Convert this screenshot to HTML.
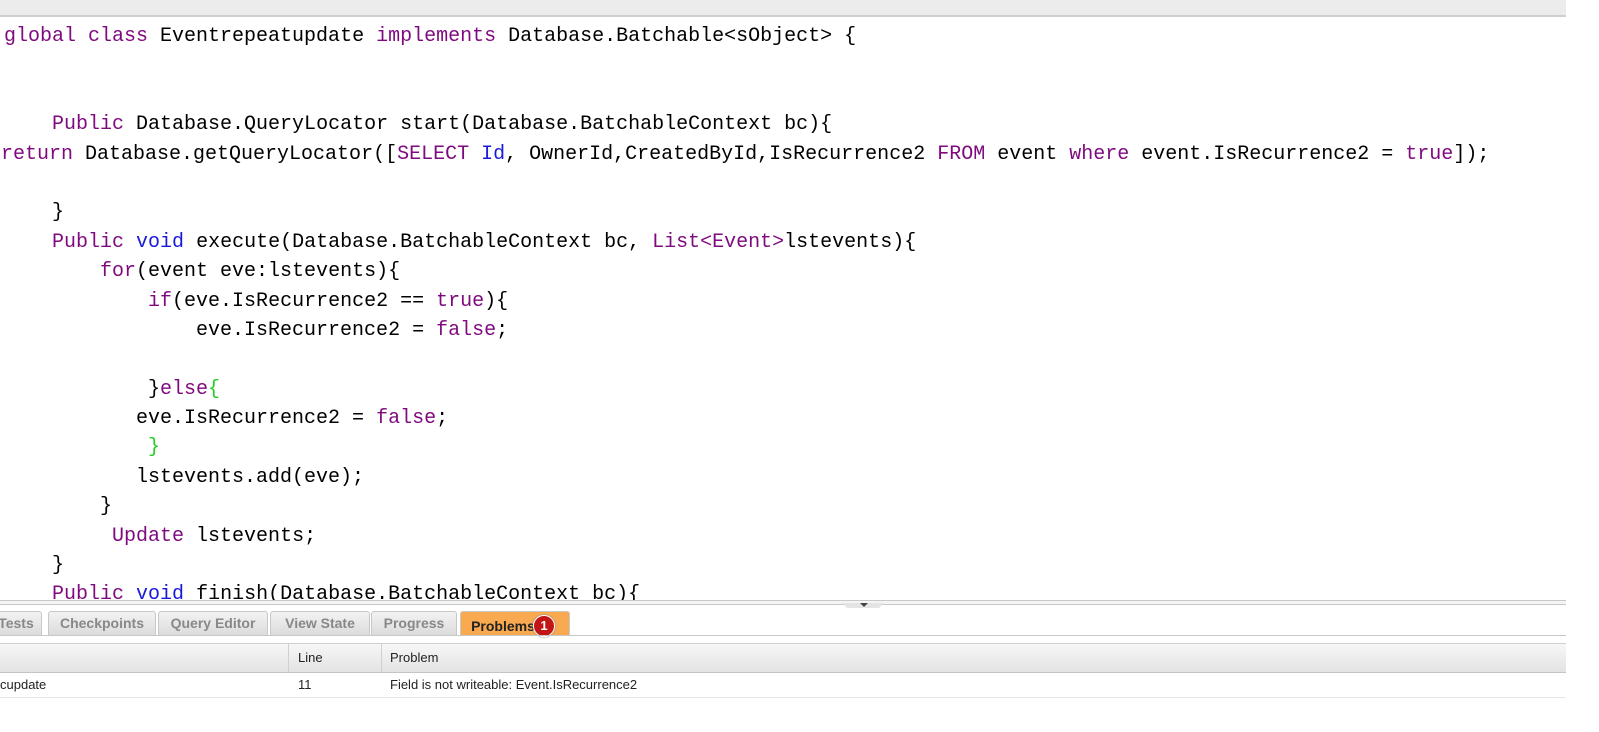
<!DOCTYPE html>
<html><head><meta charset="utf-8"><style>
body{margin:0;width:1599px;height:732px;overflow:hidden;background:#fff;font-family:"Liberation Sans",sans-serif;position:relative}
.top{position:absolute;left:0;top:0;width:1566px;height:15px;background:#ececec;border-bottom:2px solid #cfcfcf}
.code{position:absolute;left:0;top:22px;width:1566px;height:578px;overflow:hidden;font-family:"Liberation Mono",monospace;font-size:20px;line-height:29.4px;color:#000;padding-left:4px;box-sizing:border-box}
.code div{height:29.4px;white-space:pre}
.k{color:#7f0a7f}.b{color:#1a1adc}.g{color:#22cc22}
.split{position:absolute;left:0;top:600px;width:1566px;height:3px;border-top:1px solid #c8c8c8;border-bottom:1px solid #c8c8c8;background:#f4f4f4}
.handle{position:absolute;left:842px;top:603px;width:42px;height:5px;background:#e4e4e4;clip-path:polygon(0 0,100% 0,88% 100%,12% 100%)}
.tri{position:absolute;left:860px;top:603px;width:0;height:0;border-left:4px solid transparent;border-right:4px solid transparent;border-top:4px solid #444}
.tabs{position:absolute;left:0;top:611px;height:25px}
.tab{position:absolute;top:0;height:23px;background:linear-gradient(#f2f2f2,#dcdcdc);border:1px solid #c8c8c8;border-bottom:none;border-radius:3px 3px 0 0;color:#888;font-weight:bold;font-size:14px;line-height:23px;text-align:center}
.tab.act{background:#f9a94f;color:#222;line-height:28px}
.badge{position:absolute;left:533px;top:615px;width:20px;height:20px;border-radius:50%;background:#c41515;border:1px solid #fff;box-shadow:0 0 2px #888;color:#fff;font-size:13px;font-weight:bold;text-align:center;line-height:20px}
.tabline{position:absolute;left:0;top:635px;width:1566px;height:1px;background:#c8c8c8}
.hdr{position:absolute;left:0;top:643px;width:1566px;height:28px;background:linear-gradient(#f7f7f7,#e3e3e3);border-top:1px solid #cfcfcf;border-bottom:1px solid #c4c4c4;font-size:13px;color:#222}
.hdr span,.row span{position:absolute;top:0;line-height:28px}
.row{position:absolute;left:0;top:673px;width:1566px;height:24px;border-bottom:1px solid #e6e6e6;font-size:13px;color:#222}
.row span{line-height:24px}
.vl{position:absolute;top:0;width:1px;height:28px;background:#d0d0d0}
</style></head><body>
<div class="top"></div>
<div class="code"><div><span class="k">global class</span> Eventrepeatupdate <span class="k">implements</span> Database.Batchable&lt;sObject&gt; {</div><div> </div><div> </div><div>    <span class="k">Public</span> Database.QueryLocator start(Database.BatchableContext bc){</div><div style="margin-left:-3px"><span class="k">return</span> Database.getQueryLocator([<span class="k">SELECT</span> <span class="b">Id</span>, OwnerId,CreatedById,IsRecurrence2 <span class="k">FROM</span> event <span class="k">where</span> event.IsRecurrence2 = <span class="k">true</span>]);</div><div> </div><div>    }</div><div>    <span class="k">Public</span> <span class="b">void</span> execute(Database.BatchableContext bc, <span class="k">List&lt;Event&gt;</span>lstevents){</div><div>        <span class="k">for</span>(event eve:lstevents){</div><div>            <span class="k">if</span>(eve.IsRecurrence2 == <span class="k">true</span>){</div><div>                eve.IsRecurrence2 = <span class="k">false</span>;</div><div> </div><div>            }<span class="k">else</span><span class="g">{</span></div><div>           eve.IsRecurrence2 = <span class="k">false</span>;</div><div>            <span class="g">}</span></div><div>           lstevents.add(eve);</div><div>        }</div><div>         <span class="k">Update</span> lstevents;</div><div>    }</div><div>    <span class="k">Public</span> <span class="b">void</span> finish(Database.BatchableContext bc){</div></div>
<div class="split"></div>
<div class="handle"></div><div class="tri"></div>
<div class="tabs">
<div class="tab" style="left:-10px;width:50px">Tests</div>
<div class="tab" style="left:48px;width:106px">Checkpoints</div>
<div class="tab" style="left:158px;width:108px">Query Editor</div>
<div class="tab" style="left:270px;width:98px">View State</div>
<div class="tab" style="left:371px;width:84px">Progress</div>
<div class="tab act" style="left:460px;width:108px;height:24px"><span style="margin-left:-24px">Problems</span></div>
</div>
<div class="badge">1</div>
<div class="tabline"></div>
<div class="hdr"><div class="vl" style="left:288px"></div><div class="vl" style="left:381px"></div><span style="left:298px">Line</span><span style="left:390px">Problem</span></div>
<div class="row"><span style="left:0">cupdate</span><span style="left:298px">11</span><span style="left:390px">Field is not writeable: Event.IsRecurrence2</span></div>
</body></html>
